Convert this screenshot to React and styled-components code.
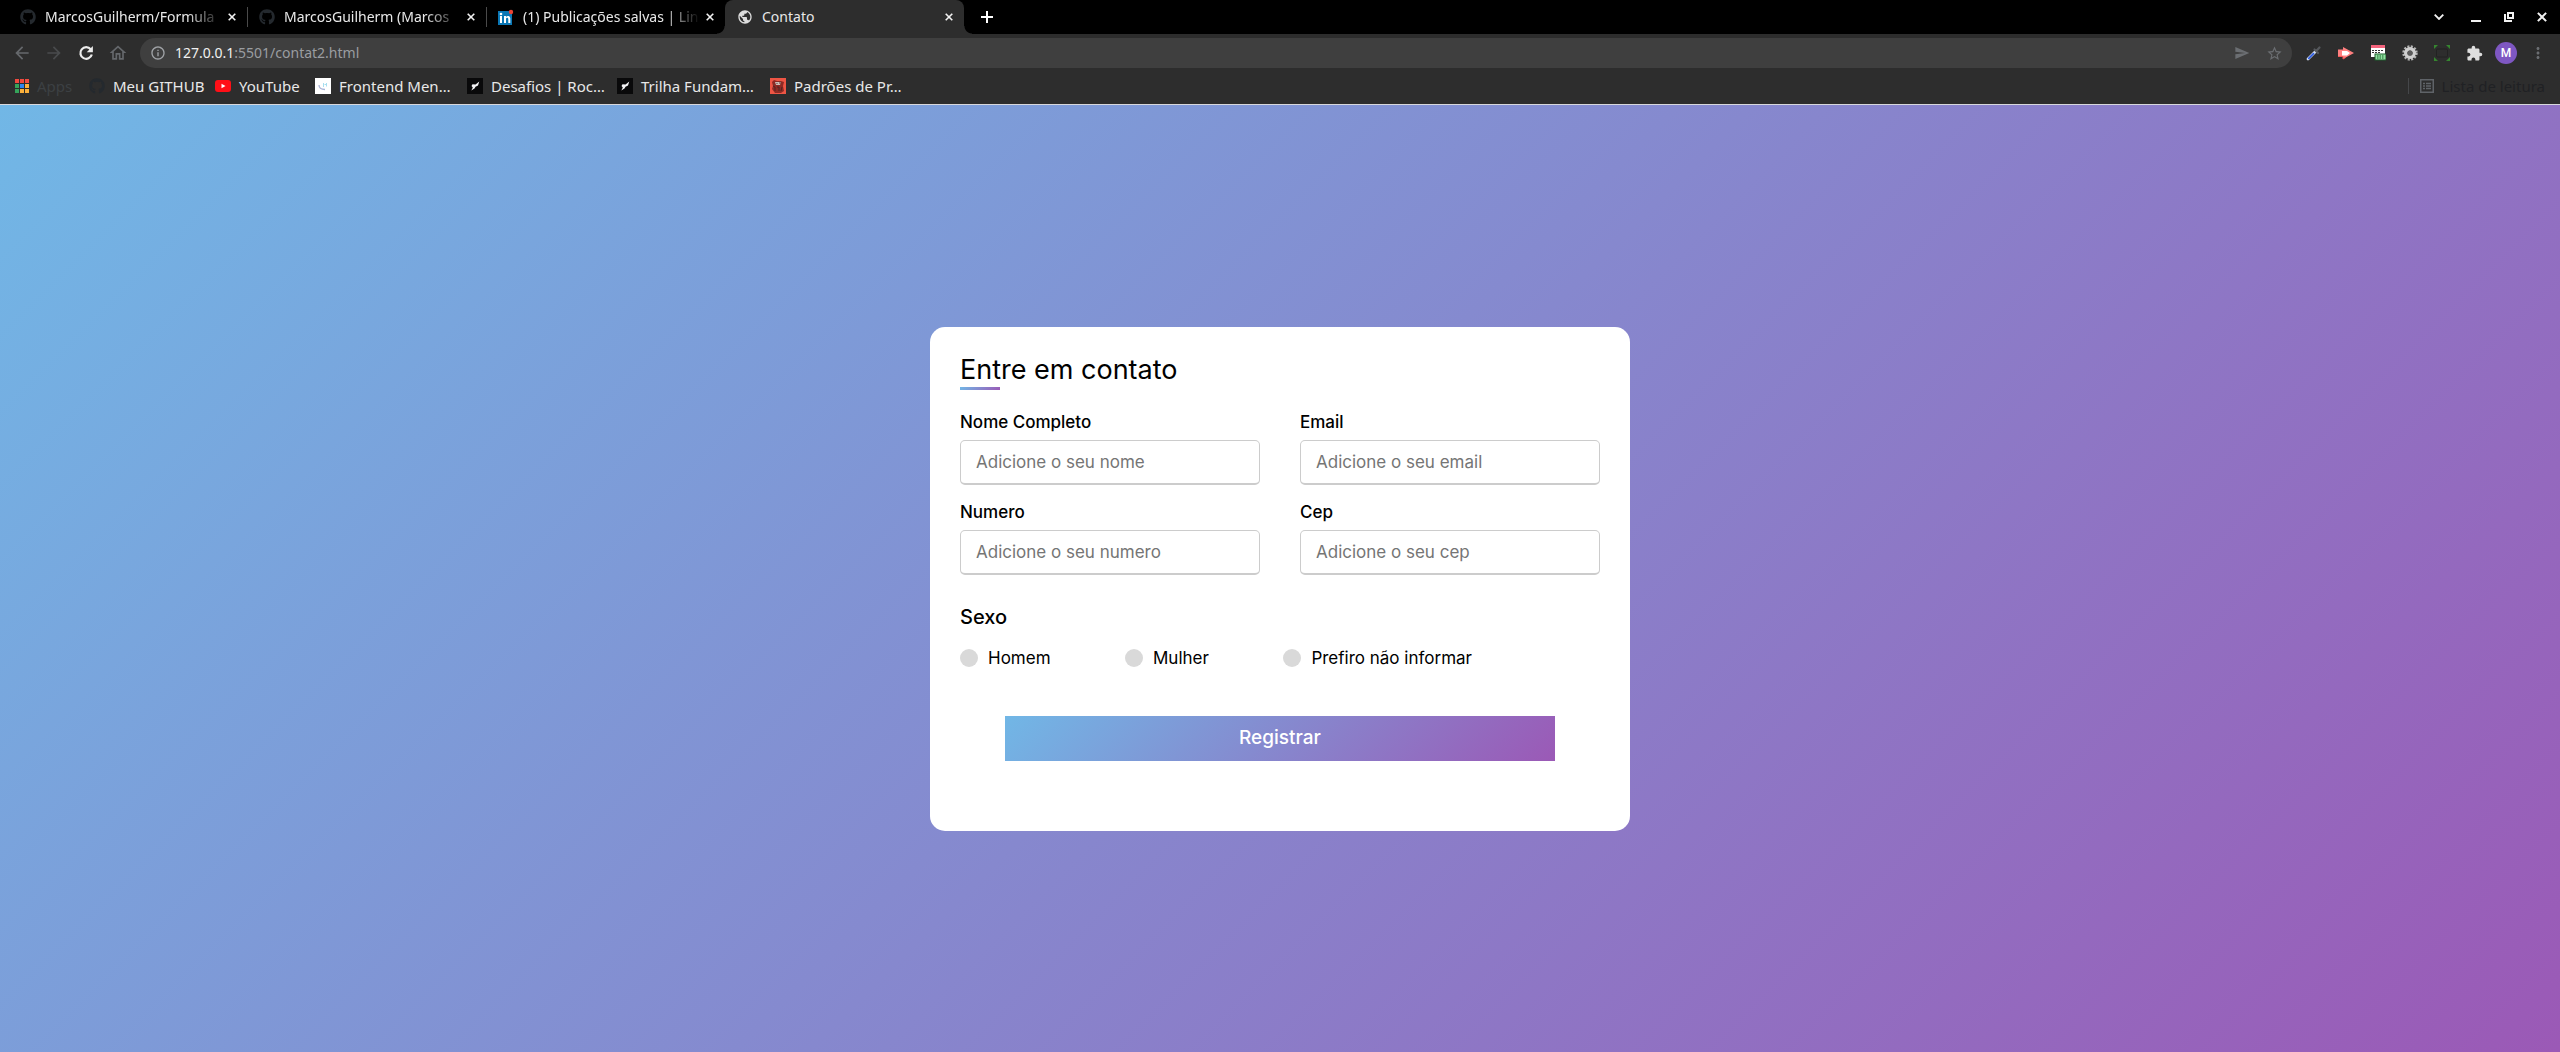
import React from "react";
import styled, { createGlobalStyle, css } from "styled-components";
import {
  MdArrowBack,
  MdArrowForward,
  MdOutlineHome,
  MdInfoOutline,
  MdSend,
  MdStarBorder,
  MdExtension,
  MdMoreVert,
  MdPublic,
} from "react-icons/md";
import { FaGithub } from "react-icons/fa";

const GlobalStyle = createGlobalStyle`
  * { box-sizing: border-box; margin: 0; padding: 0; }
  body { font-family: Inter, "Liberation Sans", sans-serif; color: #000; }
`;

const brandGradient = "linear-gradient(135deg, #71b7e6, #9b59b6)";

const Page = styled.div`
  min-height: 100vh;
  display: flex;
  flex-direction: column;
`;

/* ---------- browser chrome ---------- */

const Browser = styled.header`
  background: #2d2d2d;
  border-bottom: 1px solid #d8d8dc;
  font-family: "Noto Sans", "Open Sans", sans-serif;
  color: #e8e8e8;
`;

const TabStrip = styled.div`
  display: flex;
  align-items: center;
  height: 34px;
  padding-left: 8px;
  background: #000;
`;

const Tab = styled.div`
  position: relative;
  flex: 0 0 auto;
  display: flex;
  align-items: center;
  width: 239px;
  height: 34px;
  padding: 0 9px 0 12px;
  ${(p) =>
    p.$active &&
    css`
      background: #2d2d2d;
      border-radius: 8px 8px 0 0;
      &::before,
      &::after {
        content: "";
        position: absolute;
        bottom: 0;
        width: 8px;
        height: 8px;
      }
      &::before {
        right: 100%;
        background: radial-gradient(circle at 0 0, #000 7px, #2d2d2d 8px);
      }
      &::after {
        left: 100%;
        background: radial-gradient(circle at 100% 0, #000 7px, #2d2d2d 8px);
      }
    `}
  ${(p) =>
    p.$divided &&
    css`
      &::before {
        content: "";
        position: absolute;
        left: 0;
        top: 7px;
        width: 1px;
        height: 20px;
        background: #4a4a4a;
      }
    `}
`;

const TabTitle = styled.span`
  flex: 1;
  min-width: 0;
  margin: 0 4px 0 9px;
  overflow: hidden;
  white-space: nowrap;
  font-size: 14px;
  line-height: 20px;
  mask-image: ${(p) =>
    p.$fade ? "linear-gradient(to right, #000 80%, transparent)" : "none"};
`;

const IconButton = styled.button`
  flex: 0 0 auto;
  display: flex;
  align-items: center;
  justify-content: center;
  width: ${(p) => p.$size || 32}px;
  height: ${(p) => p.$height || p.$size || 32}px;
  border: 0;
  background: transparent;
  color: ${(p) => p.$color || "#e8e8e8"};
`;

const WindowControls = styled.div`
  display: flex;
  margin-left: auto;
  gap: 5px;
`;

const Toolbar = styled.div`
  display: flex;
  align-items: center;
  height: 38px;
  padding: 0 6px;
`;

const AddressBar = styled.div`
  flex: 1;
  display: flex;
  align-items: center;
  height: 30px;
  margin: 0 6px;
  padding: 0 2px 0 10px;
  border-radius: 15px;
  background: #3f3f3f;
  color: #a0a3a7;
`;

const Address = styled.div`
  flex: 1;
  margin-left: 9px;
  font-size: 14px;
  line-height: 20px;
  color: #9a9da1;
`;

const Host = styled.span`
  color: #f0f0f0;
`;

const Avatar = styled.span`
  display: flex;
  align-items: center;
  justify-content: center;
  width: 22px;
  height: 22px;
  border-radius: 50%;
  background: #7e57c2;
  color: #fff;
  font: 500 12px/22px Roboto, sans-serif;
`;

const BookmarkBar = styled.nav`
  display: flex;
  align-items: center;
  height: 32px;
  padding: 0 15px 4px;
`;

const Bookmark = styled.a`
  flex: 0 0 auto;
  display: flex;
  align-items: center;
  gap: 8px;
  width: ${(p) => (p.$width ? `${p.$width}px` : "auto")};
  color: ${(p) => p.$color || "#e8e8e8"};
  font-size: 15px;
  line-height: 20px;
  text-decoration: none;
  white-space: nowrap;
`;

const ReadingList = styled.div`
  display: flex;
  align-items: center;
  margin-left: auto;
  padding-left: 11px;
  border-left: 1px solid #45474a;
  height: 16px;
`;

/* ---------- contact form ---------- */

const Main = styled.main`
  flex: 1;
  display: flex;
  align-items: center;
  justify-content: center;
  padding: 10px;
  background: ${brandGradient};
`;

const Card = styled.form`
  width: 100%;
  max-width: 700px;
  padding: 25px 30px 70px;
  border-radius: 15px;
  background: #fff;
`;

const Title = styled.h1`
  font-size: 27px;
  font-weight: 400;
  line-height: 35px;

  &::after {
    content: "";
    display: block;
    width: 40px;
    height: 3px;
    background: ${brandGradient};
  }
`;

const Fields = styled.div`
  display: grid;
  grid-template-columns: 1fr 1fr;
  gap: 15px 40px;
  margin-top: 20px;
`;

const Field = styled.div`
  display: flex;
  flex-direction: column;
  gap: 6px;
`;

const Label = styled.label`
  font-size: 17px;
  font-weight: 500;
  line-height: 24px;
`;

const TextInput = styled.input`
  width: 100%;
  height: 45px;
  padding: 0 15px;
  border: 1px solid #ccc;
  border-bottom-width: 2px;
  border-radius: 5px;
  outline: none;
  background: #fff;
  font: 400 17px/24px Inter, sans-serif;

  &::placeholder {
    color: #757575;
    opacity: 1;
  }
`;

const Gender = styled.fieldset`
  margin-top: 27px;
  border: 0;
`;

const Legend = styled.legend`
  font-size: 20px;
  font-weight: 500;
  line-height: 30px;
`;

const Options = styled.div`
  display: flex;
  justify-content: space-between;
  width: 80%;
  margin-top: 14px;
`;

const Option = styled.label`
  display: flex;
  align-items: center;
  gap: 10px;
  font-size: 17px;
  line-height: 24px;
`;

const Radio = styled.input`
  appearance: none;
  width: 18px;
  height: 18px;
  border-radius: 50%;
  background: #d9d9d9;

  &:checked {
    background: #9b59b6;
  }
`;

const SubmitRow = styled.div`
  margin-top: 46px;
  padding: 0 45px;
`;

const Submit = styled.button`
  width: 100%;
  height: 45px;
  border: 0;
  background: ${brandGradient};
  color: #fff;
  font: 500 19px/24px Inter, sans-serif;
`;

/* ---------- icons ---------- */

const LinkedInIcon = () => (
  <svg width="16" height="16" viewBox="0 0 16 16">
    <rect y="2" width="14" height="14" fill="#0a77b5" />
    <rect x="2" y="7" width="2" height="7" fill="#fff" />
    <circle cx="3" cy="5" r="1.3" fill="#fff" />
    <path d="M6 14V7h2v1c1-1.600 4.300-1.500 4.300 1.500V14h-2v-4c0-1.700-2.300-1.700-2.300 0v4z" fill="#fff" />
    <circle cx="13" cy="3" r="2.200" fill="#ea4335" />
  </svg>
);

const AppsIcon = () => (
  <svg width="14" height="14" viewBox="0 0 14 14">
    {["#f04a3e", "#f04a3e", "#f04a3e", "#35a45a", "#2f86f0", "#fbb03b", "#35a45a", "#fbb03b", "#fbb03b"].map(
      (fill, i) => (
        <rect key={i} x={(i % 3) * 5} y={Math.floor(i / 3) * 5} width="4" height="4" fill={fill} />
      )
    )}
  </svg>
);

const YouTubeIcon = () => (
  <svg width="16" height="16" viewBox="0 0 16 16">
    <rect y="2" width="16" height="12" rx="3" fill="#ff0f17" />
    <path d="M6.500 5.700v4.600L10.500 8z" fill="#fff" />
  </svg>
);

const MentorIcon = () => (
  <svg width="16" height="16" viewBox="0 0 16 16">
    <rect width="16" height="16" fill="#fff" />
    <path d="M4 7c0 3 2.500 4.500 6 4.500" fill="none" stroke="#a9b3d6" strokeWidth="1.300" />
    <path d="M8.500 5v4M11.500 5v3.500M9.500 6.500h2" stroke="#a8dff0" fill="none" />
  </svg>
);

const RocketIcon = () => (
  <svg width="16" height="16" viewBox="0 0 16 16">
    <rect width="16" height="16" fill="#09090a" />
    <path d="M12.300 3.500 11 7.500 8.500 8.700 7.500 10.500 4.300 12.500 5.800 9.500 4.500 8 5.500 6.200 8.500 6.500z" fill="#f4f4f6" />
  </svg>
);

const PatternsIcon = () => (
  <svg width="16" height="16" viewBox="0 0 16 16">
    <rect width="16" height="16" fill="#ee5544" />
    <path d="M2 4l2-2 3 1h4l3 1-1 4 1 5-3 2H5l-3-4 1-3z" fill="#8e2a24" />
    <path d="M5 4h6l-1 3H6z" fill="#c9bdb6" />
    <path d="M3 8l2 1v4M12 9l-1 4M7 9h2v4" stroke="#4c2422" fill="none" />
    <path d="M7 5v1M10 4v2M4 6v1" stroke="#6b3b36" fill="none" />
  </svg>
);

const EyedropperIcon = () => (
  <svg width="16" height="16" viewBox="0 0 16 16">
    <path d="M2 14 9.500 6.500" stroke="#d3def2" strokeWidth="2.800" strokeLinecap="round" />
    <path d="M2.800 13.300 7.500 8.700" stroke="#2d5be0" strokeWidth="1.700" strokeLinecap="round" />
    <path d="M8.500 4.500l3.500 3.500M10.500 5.700 13.500 2.500" stroke="#55585c" strokeWidth="2.200" strokeLinecap="round" />
  </svg>
);

const RedArrowIcon = () => (
  <svg width="16" height="16" viewBox="0 0 16 16">
    <path d="M0 4.500h5V2l11 6-11 6v-2.500H0z" fill="#ff7f7f" />
    <path d="M4 6h5l3 2-3 2.500H4z" fill="#fff" />
    <path d="M0 11.500h5V14l3-1.700" fill="none" stroke="#ef5757" />
  </svg>
);

const CssIcon = () => (
  <svg width="16" height="16" viewBox="0 0 16 16">
    <rect x="1" width="14" height="12" fill="#fff" />
    <rect x="1" width="14" height="3" fill="#f4637c" />
    <path d="M2 5.500h12M2 7.500h9" stroke="#333" strokeDasharray="2 1" />
    <rect x="5" y="9" width="11" height="6" fill="#8fe29f" stroke="#1f5c2c" />
    <path d="M7 11h7M7 13h7" stroke="#1f5c2c" strokeDasharray="1.500 1" />
  </svg>
);

const GearIcon = () => (
  <svg width="16" height="16" viewBox="0 0 16 16">
    <circle cx="8" cy="8" r="6.400" fill="none" stroke="#b4b4b4" strokeWidth="2.600" strokeDasharray="2 1.350" />
    <circle cx="8" cy="8" r="4.300" fill="none" stroke="#cfcfcf" strokeWidth="3.400" />
    <circle cx="8" cy="8" r="2.500" fill="#5b5b5b" />
  </svg>
);

const FrameIcon = () => (
  <svg width="16" height="16" viewBox="0 0 16 16">
    <path d="M0 0h4L0 4zM16 0v4l-4-4zM0 16v-4l4 4zM16 16h-4l4-4z" fill="#35862f" />
    <rect x="2.500" y="4" width="11" height="8" rx="1" fill="none" stroke="#222" />
  </svg>
);

const ReadingListIcon = () => (
  <svg width="14" height="14" viewBox="0 0 14 14">
    <rect x="0.750" y="0.750" width="12.500" height="12.500" fill="none" stroke="#5f6368" strokeWidth="1.500" />
    <path d="M3 4.500h2M6 4.500h5M3 7h2M6 7h5M3 9.500h2M6 9.500h5" stroke="#5f6368" strokeWidth="1.500" />
  </svg>
);

const ReloadIcon = () => (
  <svg width="16" height="16" viewBox="0 0 16 16" fill="none" stroke="#ececec" strokeWidth="2.200">
    <path d="M12.700 4.300A5.800 5.800 0 1 0 13.800 9.500" />
    <path d="M14.900 1v6.200H8.700z" fill="#ececec" stroke="none" />
  </svg>
);

const CloseIcon = ({ size = 8 }) => (
  <svg width={size} height={size} viewBox="0 0 8 8">
    <path d="M0.700 0.700l6.600 6.600M7.300 0.700L0.700 7.300" stroke="#f2f2f2" strokeWidth="1.600" />
  </svg>
);

const PlusIcon = () => (
  <svg width="12" height="12" viewBox="0 0 12 12">
    <path d="M6 0v12M0 6h12" stroke="#fff" strokeWidth="2" />
  </svg>
);

const ChevronIcon = () => (
  <svg width="10" height="6" viewBox="0 0 10 6">
    <path d="M0.700 0.700L5 5l4.300-4.300" fill="none" stroke="#f2f2f2" strokeWidth="1.800" />
  </svg>
);

const MinimizeIcon = () => (
  <svg width="10" height="10" viewBox="0 0 10 10">
    <path d="M0 9h10" stroke="#f2f2f2" strokeWidth="2" />
  </svg>
);

const RestoreIcon = () => (
  <svg width="10" height="10" viewBox="0 0 10 10">
    <path d="M4 1h5v5H4zM1 2v7h7" fill="none" stroke="#f2f2f2" strokeWidth="2" />
  </svg>
);

/* ---------- data ---------- */

const tabs = [
  { title: "MarcosGuilherm/Formula", icon: <FaGithub size={16} color="#24292e" />, fade: true },
  { title: "MarcosGuilherm (Marcos", icon: <FaGithub size={16} color="#24292e" />, fade: true, divided: true },
  { title: "(1) Publicações salvas | Lin", icon: <LinkedInIcon />, fade: true, divided: true },
  { title: "Contato", icon: <MdPublic size={16} color="#dcdcdc" />, active: true },
];

const bookmarks = [
  { name: "Apps", icon: <AppsIcon />, width: 74, color: "#3c4043" },
  { name: "Meu GITHUB", icon: <FaGithub size={16} color="#24292e" />, width: 126 },
  { name: "YouTube", icon: <YouTubeIcon />, width: 100 },
  { name: "Frontend Men…", icon: <MentorIcon />, width: 152 },
  { name: "Desafios | Roc…", icon: <RocketIcon />, width: 150 },
  { name: "Trilha Fundam…", icon: <RocketIcon />, width: 153 },
  { name: "Padrões de Pr…", icon: <PatternsIcon /> },
];

const extensions = [
  { label: "Conta-gotas", icon: <EyedropperIcon /> },
  { label: "Gravar", icon: <RedArrowIcon /> },
  { label: "CSS", icon: <CssIcon /> },
  { label: "Ajustes", icon: <GearIcon /> },
  { label: "Captura", icon: <FrameIcon /> },
  { label: "Extensões", icon: <MdExtension size={17} color="#dedede" /> },
  { label: "Perfil", icon: <Avatar>M</Avatar> },
  { label: "Menu", icon: <MdMoreVert size={18} color="#6b6e72" /> },
];

const fields = [
  { id: "nome", label: "Nome Completo", placeholder: "Adicione o seu nome", type: "text" },
  { id: "email", label: "Email", placeholder: "Adicione o seu email", type: "email" },
  { id: "numero", label: "Numero", placeholder: "Adicione o seu numero", type: "text" },
  { id: "cep", label: "Cep", placeholder: "Adicione o seu cep", type: "text" },
];

const genders = ["Homem", "Mulher", "Prefiro não informar"];

export default function App() {
  return (
    <Page>
      <GlobalStyle />
      <Browser>
        <TabStrip>
          {tabs.map((t) => (
            <Tab key={t.title} $active={t.active} $divided={t.divided}>
              {t.icon}
              <TabTitle $fade={t.fade}>{t.title}</TabTitle>
              <IconButton $size={12} aria-label="Fechar aba">
                <CloseIcon />
              </IconButton>
            </Tab>
          ))}
          <IconButton $size={46} $height={34} aria-label="Nova aba">
            <PlusIcon />
          </IconButton>
          <WindowControls>
            <IconButton $size={28} aria-label="Abas">
              <ChevronIcon />
            </IconButton>
            <IconButton $size={36} $height={28} aria-label="Minimizar">
              <MinimizeIcon />
            </IconButton>
            <IconButton $size={20} $height={28} aria-label="Restaurar">
              <RestoreIcon />
            </IconButton>
            <IconButton $size={36} $height={28} aria-label="Fechar">
              <CloseIcon size={10} />
            </IconButton>
          </WindowControls>
        </TabStrip>

        <Toolbar>
          <IconButton $color="#65686c" aria-label="Voltar">
            <MdArrowBack size={20} />
          </IconButton>
          <IconButton $color="#494b4d" aria-label="Avançar">
            <MdArrowForward size={20} />
          </IconButton>
          <IconButton aria-label="Recarregar">
            <ReloadIcon />
          </IconButton>
          <IconButton $color="#65686c" aria-label="Início">
            <MdOutlineHome size={20} />
          </IconButton>
          <AddressBar>
            <MdInfoOutline size={16} />
            <Address>
              <Host>127.0.0.1</Host>:5501/contat2.html
            </Address>
            <IconButton $size={32} $height={30} $color="#6b6e72" aria-label="Enviar">
              <MdSend size={16} />
            </IconButton>
            <IconButton $size={32} $height={30} $color="#6b6e72" aria-label="Favoritar">
              <MdStarBorder size={17} />
            </IconButton>
          </AddressBar>
          {extensions.map((e) => (
            <IconButton key={e.label} aria-label={e.label}>
              {e.icon}
            </IconButton>
          ))}
        </Toolbar>

        <BookmarkBar>
          {bookmarks.map((b) => (
            <Bookmark key={b.name} href="#" $width={b.width} $color={b.color}>
              {b.icon}
              {b.name}
            </Bookmark>
          ))}
          <ReadingList>
            <Bookmark href="#" $color="#202124">
              <ReadingListIcon />
              Lista de leitura
            </Bookmark>
          </ReadingList>
        </BookmarkBar>
      </Browser>

      <Main>
        <Card onSubmit={(e) => e.preventDefault()}>
          <Title>Entre em contato</Title>
          <Fields>
            {fields.map((f) => (
              <Field key={f.id}>
                <Label htmlFor={f.id}>{f.label}</Label>
                <TextInput id={f.id} type={f.type} placeholder={f.placeholder} />
              </Field>
            ))}
          </Fields>
          <Gender>
            <Legend>Sexo</Legend>
            <Options>
              {genders.map((g) => (
                <Option key={g}>
                  <Radio type="radio" name="sexo" value={g} />
                  {g}
                </Option>
              ))}
            </Options>
          </Gender>
          <SubmitRow>
            <Submit type="submit">Registrar</Submit>
          </SubmitRow>
        </Card>
      </Main>
    </Page>
  );
}
